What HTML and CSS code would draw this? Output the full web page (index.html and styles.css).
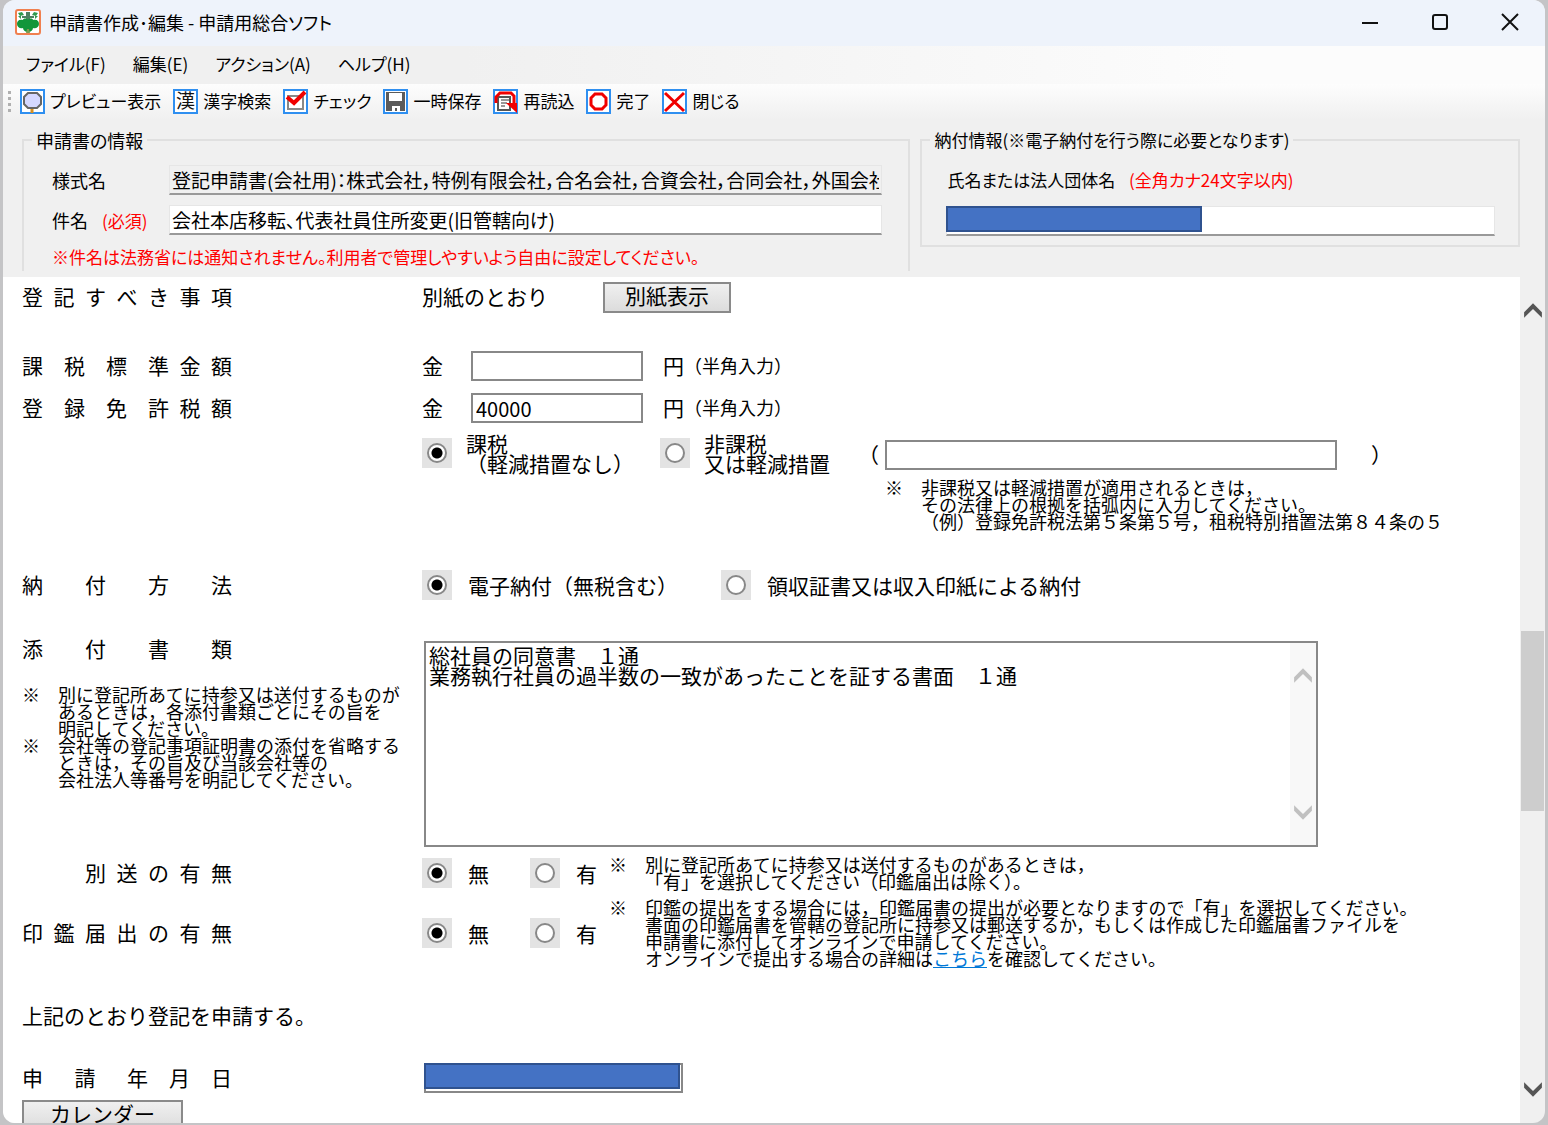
FILE: index.html
```html
<!DOCTYPE html>
<html lang="ja">
<head>
<meta charset="utf-8">
<title>申請書作成・編集 - 申請用総合ソフト</title>
<link rel="stylesheet" href="styles.css">
</head>
<body>
<div class="window">
  <header class="titlebar">
    <svg class="app-icon" viewBox="0 0 26 26" aria-hidden="true">
      <rect x="1" y="1" width="24" height="24" rx="2" fill="#fff" stroke="#f08050" stroke-width="2"/>
      <path d="M3 4l4-1 2 3-4 1zM17 6l2-3 4 1-2 3zM3 7h3v3zM23 7h-3v3z" fill="#2f9a4c"/>
      <path d="M11 3h4v4h4v2h-4v3h-4V9H7V7h4z" fill="#4d8060"/>
      <path d="M13 11c1-2 5-2 5 0 4-1 6 1 6 4s-3 5-6 4c0 2-2 4-5 4s-5-2-5-4c-3 1-6-1-6-4s2-5 6-4c0-2 4-2 5 0z" fill="#12963a"/>
      <path d="M12 20h2l1 4h-4z" fill="#7b9b52"/>
    </svg>
    <h1 class="title">申請書作成･編集 - 申請用総合ソフト</h1>
    <div class="window-buttons">
      <button type="button" aria-label="最小化"><svg viewBox="0 0 18 18"><path d="M1 10h16"/></svg></button>
      <button type="button" aria-label="最大化"><svg viewBox="0 0 18 18"><rect x="2" y="2" width="14" height="14" rx="2"/></svg></button>
      <button type="button" aria-label="閉じる"><svg viewBox="0 0 18 18"><path d="M1 1l16 16M17 1L1 17"/></svg></button>
    </div>
  </header>

  <nav class="menubar">
    <button type="button">ファイル(F)</button>
    <button type="button">編集(E)</button>
    <button type="button">アクション(A)</button>
    <button type="button">ヘルプ(H)</button>
  </nav>

  <div class="toolbar" role="toolbar">
    <span class="grip"></span>
    <button type="button"><svg viewBox="0 0 25 25"><rect class="frame" x="1" y="1" width="23" height="23"/><path d="M8 4h9l4 4v7l-4 4H8l-4-4V8z" fill="#d5d8ff" stroke="#666" stroke-width="2"/><path d="M12 20v4" stroke="#d89020" stroke-width="3"/></svg>プレビュー表示</button>
    <button type="button"><svg viewBox="0 0 25 25"><rect class="frame" x="1" y="1" width="23" height="23"/><text x="3" y="19" font-size="19">漢</text></svg>漢字検索</button>
    <button type="button"><svg viewBox="0 0 25 25"><rect class="frame" x="1" y="1" width="23" height="23"/><path d="M5 7h15v13H5z" fill="#fff" stroke="#888" stroke-width="2"/><path d="M4 8l7 6L22 3" fill="none" stroke="#f00000" stroke-width="4"/></svg>チェック</button>
    <button type="button"><svg viewBox="0 0 25 25"><rect class="frame" x="1" y="1" width="23" height="23"/><path d="M3 3h19v19H3z" fill="#5b5b5b"/><path d="M6 4h13v8H6zM9 17h8v5h-3v-3h-2v3H9z" fill="#fff"/></svg>一時保存</button>
    <button type="button"><svg viewBox="0 0 25 25"><rect class="frame" x="1" y="1" width="23" height="23"/><path d="M5 8h12v13H5z" fill="#fff" stroke="#555" stroke-width="2"/><path d="M8 11h8M8 14h6M8 17h4" stroke="#333" stroke-width="1"/><path d="M3 14V8l4-4h11l3 3v9" fill="none" stroke="#f00000" stroke-width="3"/><path d="M13 14h11v10z" fill="#f00000"/></svg>再読込</button>
    <button type="button"><svg viewBox="0 0 25 25"><rect class="frame" x="1" y="1" width="23" height="23"/><path d="M9 5h7l4 4v7l-4 4H9l-4-4V9z" fill="#fff" stroke="#f00000" stroke-width="3"/></svg>完了</button>
    <button type="button"><svg viewBox="0 0 25 25"><rect class="frame" x="1" y="1" width="23" height="23"/><path d="M3 4l19 18M22 4L3 22" stroke="#f00000" stroke-width="3"/></svg>閉じる</button>
  </div>

  <section class="info">
    <fieldset class="group group-app">
      <legend>申請書の情報</legend>
      <div class="info-row">
        <label for="form-name">様式名</label>
        <input id="form-name" class="sunken" readonly value="登記申請書(会社用)：株式会社，特例有限会社，合名会社，合資会社，合同会社，外国会社">
      </div>
      <div class="info-row">
        <label for="subject">件名 <span class="required">(必須)</span></label>
        <input id="subject" class="sunken" value="会社本店移転、代表社員住所変更(旧管轄向け)">
      </div>
      <p class="caution">※件名は法務省には通知されません。利用者で管理しやすいよう自由に設定してください。</p>
    </fieldset>
    <fieldset class="group group-pay">
      <legend>納付情報(※電子納付を行う際に必要となります)</legend>
      <label for="payer">氏名または法人団体名 <span class="required">(全角カナ24文字以内)</span></label>
      <div class="masked">
        <input id="payer" class="sunken">
        <span class="mask"></span>
      </div>
    </fieldset>
  </section>

  <main class="viewport">
    <form class="form">
      <div class="row row-button">
        <span class="name">登&ensp;記&ensp;す&ensp;べ&ensp;き&ensp;事&ensp;項</span>
        <div class="value">
          <span class="as-attached">別紙のとおり</span>
          <button type="button" class="push">別紙表示</button>
        </div>
      </div>
      <div class="row row-money first-money">
        <label class="name" for="base">課　税　標　準&ensp;金&ensp;額</label>
        <div class="value">
          <span class="kin">金</span><input id="base" class="box money">
          <span class="yen">円<small>（半角入力）</small></span>
        </div>
      </div>
      <div class="row row-money">
        <label class="name" for="tax">登　録　免　許&ensp;税&ensp;額</label>
        <div class="value">
          <span class="kin">金</span><input id="tax" class="box money" value="40000">
          <span class="yen">円<small>（半角入力）</small></span>
        </div>
      </div>
      <div class="row row-relief">
        <span class="name"></span>
        <div class="value">
          <label class="choice relief"><span class="tile"><input type="radio" name="relief" checked></span><span>課税<br>（軽減措置なし）</span></label>
          <label class="choice"><span class="tile"><input type="radio" name="relief"></span><span>非課税<br>又は軽減措置</span></label>
          <div class="basis">
            <span class="paren">（</span><input class="box" aria-label="根拠"><span class="paren close">）</span>
            <p class="note basis-note"><span>※</span><span>非課税又は軽減措置が適用されるときは，<br>その法律上の根拠を括弧内に入力してください。<br>（例）登録免許税法第５条第５号，租税特別措置法第８４条の５</span></p>
          </div>
        </div>
      </div>
      <div class="row row-method">
        <span class="name">納　　付　　方　　法</span>
        <div class="value">
          <label class="choice method"><span class="tile"><input type="radio" name="method" checked></span>電子納付（無税含む）</label>
          <label class="choice"><span class="tile"><input type="radio" name="method"></span>領収証書又は収入印紙による納付</label>
        </div>
      </div>
      <div class="row row-docs">
        <div class="name">
          <label for="docs">添　　付　　書　　類</label>
          <div class="docs-notes">
            <p class="note"><span>※</span><span>別に登記所あてに持参又は送付するものが<br>あるときは，各添付書類ごとにその旨を<br>明記してください。</span></p>
            <p class="note"><span>※</span><span>会社等の登記事項証明書の添付を省略する<br>ときは，その旨及び当該会社等の<br>会社法人等番号を明記してください。</span></p>
          </div>
        </div>
        <div class="docs-box">
          <textarea id="docs">総社員の同意書　１通
業務執行社員の過半数の一致があったことを証する書面　１通</textarea>
          <div class="docs-scroll">
            <svg viewBox="0 0 18 14"><path d="M1 14V9l8-8 8 8v5L9 6z"/></svg>
            <svg viewBox="0 0 18 14"><path d="M1 0v5l8 8 8-8V0L9 8z"/></svg>
          </div>
        </div>
      </div>
      <div class="row row-send">
        <span class="name indent">別&ensp;送&ensp;の&ensp;有&ensp;無</span>
        <div class="value">
          <label class="choice short"><span class="tile"><input type="radio" name="send" checked></span>無</label>
          <label class="choice short"><span class="tile"><input type="radio" name="send"></span>有</label>
          <p class="note"><span>※</span><span>別に登記所あてに持参又は送付するものがあるときは，<br>「有」を選択してください（印鑑届出は除く）。</span></p>
        </div>
      </div>
      <div class="row row-seal">
        <span class="name">印&ensp;鑑&ensp;届&ensp;出&ensp;の&ensp;有&ensp;無</span>
        <div class="value">
          <label class="choice short"><span class="tile"><input type="radio" name="seal" checked></span>無</label>
          <label class="choice short"><span class="tile"><input type="radio" name="seal"></span>有</label>
          <p class="note"><span>※</span><span>印鑑の提出をする場合には，印鑑届書の提出が必要となりますので「有」を選択してください。<br>書面の印鑑届書を管轄の登記所に持参又は郵送するか，もしくは作成した印鑑届書ファイルを<br>申請書に添付してオンラインで申請してください。<br>オンラインで提出する場合の詳細は<a href="#">こちら</a>を確認してください。</span></p>
        </div>
      </div>
      <p class="statement">上記のとおり登記を申請する。</p>
      <div class="row row-date">
        <label class="name" for="date">申　&ensp;請　&ensp;年　月　日</label>
        <div class="value masked">
          <input id="date" class="box date">
          <span class="mask"></span>
        </div>
      </div>
      <button type="button" class="push calendar">カレンダー</button>
    </form>
    <div class="scrollbar">
      <svg viewBox="0 0 18 14"><path d="M1 14V9l8-8 8 8v5L9 6z"/></svg>
      <div class="track"><span class="thumb"></span></div>
      <svg viewBox="0 0 18 14"><path d="M1 0v5l8 8 8-8V0L9 8z"/></svg>
    </div>
  </main>
</div>
</body>
</html>
```

FILE: styles.css
```css
* { box-sizing: border-box; }

body {
  margin: 0;
  height: 100vh;
  padding: 0 3px 2px;
  background: #c4c4c6;
  font-family: "Noto Sans CJK JP", sans-serif;
  font-size: 17px;
  color: #000;
}

button, input, textarea { font: inherit; color: inherit; }
p, h1 { margin: 0; }

.window {
  display: flex;
  flex-direction: column;
  height: 100%;
  overflow: hidden;
  border-radius: 12px;
  background: #f0f0f0;
}

/* Title bar */
.titlebar {
  flex: none;
  display: flex;
  align-items: center;
  height: 46px;
  padding: 0 17px 3px 12px;
  gap: 8px;
  background: #eef3fb;
}
.app-icon { width: 26px; height: 26px; }
.title {
  font-size: 18px;
  font-weight: 400;
  line-height: 24px;
  font-feature-settings: "palt";
}
.window-buttons { display: flex; gap: 34px; margin-left: auto; }
.window-buttons button {
  width: 36px;
  height: 24px;
  padding: 0;
  border: 0;
  background: none;
}
.window-buttons svg {
  display: block;
  width: 18px;
  height: 18px;
  margin: 0 auto;
  fill: none;
  stroke: #111;
  stroke-width: 2;
}

/* Menu and tools */
.menubar {
  flex: none;
  display: flex;
  align-items: center;
  height: 38px;
  padding: 0 23px 3px;
  gap: 27px;
  background: linear-gradient(90deg, #f0f0f0 30%, #fcfcfc 80%);
}
.menubar button, .toolbar button {
  display: flex;
  align-items: center;
  padding: 0;
  border: 0;
  background: none;
  line-height: 26px;
  white-space: nowrap;
  font-feature-settings: "palt";
}
.toolbar {
  flex: none;
  display: flex;
  align-items: center;
  height: 36px;
  padding: 0 5px 2px;
  gap: 12px;
  background: linear-gradient(#fdfdfd, #f0f0f0);
}
.toolbar button { gap: 5px; }
.toolbar svg { width: 25px; height: 25px; fill: #111; }
.toolbar .frame { fill: #fff; stroke: #2f8ff0; stroke-width: 2; }
.grip {
  width: 3px;
  height: 21px;
  margin-right: -3px;
  background: repeating-linear-gradient(#b0b0b0 0 3px, transparent 3px 6px);
}

/* Application and payment information */
.info {
  flex: none;
  display: grid;
  grid-template-columns: minmax(0, 889fr) minmax(0, 600fr);
  align-items: start;
  gap: 10px;
  height: 157px;
  padding: 6px 25px 6px 19px;
  font-feature-settings: "palt";
}
.group {
  min-width: 0;
  margin: 0;
  border: 2px solid #e0e0e0;
}
.group legend { padding: 0 4px; margin-left: -6px; line-height: 28px; }
.group-app {
  height: 145px;
  padding: 6px 26px 0 14px;
  border-width: 2px 2px 0;
}
.group-app legend { font-size: 18px; }
.group-pay { height: 121px; padding: 6px 23px 0 14px; }
.group-pay label { display: block; padding-left: 11px; line-height: 40px; }
.info-row { display: flex; align-items: center; height: 40px; padding-left: 14px; }
.info-row label { flex: none; width: 117px; font-size: 18px; }
.required { margin-left: 10px; color: #f00; }
.info-row .required { font-size: 17px; }
.caution { padding-left: 14px; line-height: 34px; color: #f00; white-space: nowrap; }
.sunken {
  width: 100%;
  height: 30px;
  padding: 0 2px;
  border: 1px solid #e6e6e6;
  border-bottom: 2px solid #999;
  background: #fff;
  font-size: 19px;
  font-feature-settings: "palt";
}
.sunken[readonly] { background: #f0f0f0; }

.masked { position: relative; }
.mask {
  position: absolute;
  top: 0;
  left: 0;
  width: 256px;
  height: 26px;
  border: 2px solid #2f528f;
  background: #4472c4;
}
.group-pay .masked { margin: 6px 0 0 10px; }

/* Scrolling form */
.viewport { flex: 1; min-height: 0; display: flex; overflow: hidden; }
.form {
  flex: 1;
  min-width: 0;
  padding-left: 19px;
  background: #fff;
  font-size: 21px;
  line-height: 20px;
}
.row { display: grid; grid-template-columns: 400px 1fr; align-items: center; }
.name { padding-bottom: 2px; white-space: nowrap; }
.indent { padding-left: 63px; }
.value { display: flex; align-items: center; white-space: nowrap; }
.push {
  height: 31px;
  padding: 0 0 4px;
  border: 2px solid #8a8a8a;
  background: linear-gradient(#f0f0f0, #dcdcdc);
  line-height: 23px;
}
.row-button { height: 40px; }
.as-attached { width: 181px; padding-bottom: 2px; }
.row-button .push { width: 128px; }

.box { height: 30px; padding: 0 3px; border: 2px solid #888; background: #fff; }
.row-money { height: 42px; }
.first-money { margin-top: 28px; }
.kin { width: 49px; padding-bottom: 2px; }
.money { width: 172px; font-size: 20px; }
.yen { display: flex; margin-left: 20px; padding-bottom: 2px; }
small { font-size: 18px; }

.choice { display: flex; align-items: center; gap: 16px; }
.tile { flex: none; width: 30px; height: 30px; padding: 5px; background: #e3e3e3; }
.tile input {
  appearance: none;
  display: block;
  width: 20px;
  height: 20px;
  margin: 0;
  border: 2px solid #888;
  border-radius: 50%;
  background: #fff;
}
.tile input:checked { background: radial-gradient(circle, #000 5px, #fff 6px); }

.row-relief { align-items: start; padding-top: 4px; }
.row-relief .value { align-items: flex-start; }
.relief { width: 238px; }
.basis {
  display: grid;
  grid-template-columns: 27px 452px 1fr;
  align-items: center;
  row-gap: 9px;
  margin-left: 28px;
}
.row-relief .choice { height: 40px; gap: 14px; }
.basis .box { margin-top: 7px; }
.paren { padding-top: 4px; }
.paren.close { padding-left: 34px; }
.basis-note { grid-column: 2 / 4; }

.note {
  display: grid;
  grid-template-columns: 36px auto;
  font-size: 18px;
  line-height: 17px;
  white-space: nowrap;
}
.note a { color: #0078d7; }

.row-method { height: 42px; margin-top: 34px; }
.method { width: 299px; }

.row-docs { align-items: start; margin-top: 35px; }
.row-docs .name label { display: block; line-height: 14px; }
.docs-notes { margin-top: 31px; }
.docs-box {
  display: flex;
  width: 894px;
  height: 206px;
  margin-left: 2px;
  border: 2px solid #888;
}
.docs-box textarea {
  flex: 1;
  padding: 2px 3px;
  border: 0;
  outline: 0;
  resize: none;
  background: #fff;
  line-height: 20px;
  overflow: hidden;
}
.docs-scroll {
  display: flex;
  flex-direction: column;
  justify-content: space-between;
  align-items: center;
  width: 26px;
  padding: 24px 0;
  background: #f8f8f8;
}
.docs-scroll svg { width: 20px; height: 16px; fill: #c0c0c0; }

.short { width: 108px; }
.short:nth-child(2) { width: 79px; }
.row-send { margin-top: 9px; height: 34px; }
.row-seal { margin-top: 9px; height: 68px; }
.statement { margin-top: 38px; line-height: 20px; }
.row-date { margin-top: 38px; height: 30px; }
.row-date .masked { margin-left: 2px; }
.date { width: 259px; }
.calendar { width: 161px; margin-top: 7px; }

.scrollbar {
  flex: none;
  display: flex;
  flex-direction: column;
  align-items: center;
  width: 25px;
  padding: 25px 0;
}
.scrollbar svg { width: 20px; height: 16px; fill: #555; }
.track { flex: 1; width: 23px; }
.thumb { display: block; height: 180px; margin-top: 313px; background: #cdcdcd; }
```
